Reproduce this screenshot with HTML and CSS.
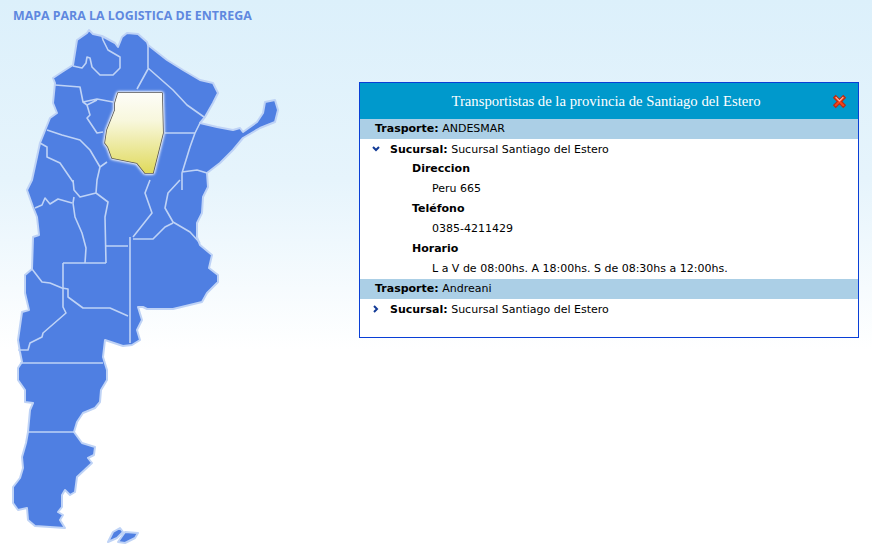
FILE: index.html
```html
<!DOCTYPE html>
<html lang="es">
<head>
  <meta charset="UTF-8" />
  <title>Mapa para la logistica de entrega</title>
  <link rel="stylesheet" href="styles.css">
</head>
<body>
  <div class="page">
    <div class="map-col">
      <h1 class="map-title">MAPA PARA LA LOGISTICA DE ENTREGA</h1>
      <svg class="map" viewBox="0 27 290 520" width="290" height="520">
        <defs>
          <linearGradient id="prov" x1="0" y1="0" x2="0" y2="1">
            <stop offset="0" stop-color="#fdfdf8"/>
            <stop offset="0.35" stop-color="#f8f7dc"/>
            <stop offset="1" stop-color="#e0da5c"/>
          </linearGradient>
        </defs>
        <!-- pais -->
        <path class="land" d="M73 65L77 40 87 33 89 30 93 34 102 36 115 43 118 47 122 37 127 33 138 34 147 42 148 45 167 60 183 70 200 80 213 83 218 93 213 103 205 117 200 123 217 127 233 130 240 128 243 132 257 122 263 113 265 102 275 100 278 110 275 122 260 128 243 138 233 150 220 163 207 173 208 187 203 197 202 213 197 223 197 237 200 245 212 255 209 268 218 275 218 282 207 293 202 302 173 309 147 309 143 307 138 307 142 320 137 330 140 340 132 345 123 346 105 340 103 357 107 370 107 380 101 390 100 402 95 408 83 413 77 422 74 432 82 443 95 447 94 455 88 458 92 463 77 477 75 492 70 495 65 490 62 495 62 507 58 512 63 515 60 520 65 528 35 526 28 520 27 508 18 510 13 503 13 487 20 478 23 468 22 457 26 443 28 432 30 410 33 403 25 402 25 390 18 380 18 368 22 362 20 352 18 340 22 312 29 310 25 293 25 275 32 269 33 237 39 235 37 217 33 207 27 190 32 180 40 143 50 118 57 113 53 103 55 83 53 78 62 72Z"/>
        <path class="land" d="M108 542L113 532 120 528 123 532 117 538ZM118 542L125 532 138 533 135 538 125 543Z"/>
        <!-- limites entre provincias -->
        <path class="lines" d="M73 66L82 68 86 63 87 57 90 58 92 67 100 75 113 75 120 68 120 57 108 50 103 40 102 36"/>
        <path class="lines" d="M148 45L148 68 173 90 187 105 204 117M148 69L137 89"/>
        <path class="lines" d="M55 85L80 87 83 102 97 99 113 102M87 105L90 115 87 118 97 133 103 132M83 102L87 105 97 100"/>
        <path class="lines" d="M47 130L62 135 80 140 90 150 100 167 107 162M100 167L97 180 96 193 108 202 105 217 106 263"/>
        <path class="lines" d="M165 133L195 133 200 123M195 133L190 147 182 173 182 190M182 172L197 170 207 173"/>
        <path class="lines" d="M180 180L168 193 165 208 173 222 190 232 200 243M173 223L165 227 153 239 133 239M150 180L145 193 152 213 133 237"/>
        <path class="lines" d="M130 237L130 343M105 246L128 246M63 263L106 263M63 263L63 307 66 313 43 333 42 337 30 343 28 350 18 350"/>
        <path class="lines" d="M73 180L74 190 80 197 96 193M74 197L73 203 75 217 82 233 86 248 85 263M35 208L42 205 45 198 50 204 58 199 72 203"/>
        <path class="lines" d="M32 269L42 282 50 283 62 288 68 289 68 297 83 308 110 308 128 316"/>
        <path class="lines" d="M40 143L47 147 47 157 60 163 73 182M20 363L103 363M28 432L74 432"/>
        <!-- Santiago del Estero -->
        <path class="selected" d="M118 93L162 93 163 133 153 173 145 173 137 163 112 158 108 147 105 143 107 130 115 110 115 103Z"/>
      </svg>
    </div>

    <div class="panel">
      <div class="panel-head">
        <span class="panel-title">Transportistas de la provincia de Santiago del Estero</span>
        <svg class="close" viewBox="0 0 14 14" width="15" height="15">
          <path d="M1.5 3.5L3.5 1.5 7 5 10.5 1.5 12.5 3.5 9 7 12.5 10.5 10.5 12.5 7 9 3.5 12.5 1.5 10.5 5 7Z" fill="#f4441a" stroke="#b92a12" stroke-width="1"/>
          <path d="M3.5 3L7 6.5 10.5 3" fill="none" stroke="#ffb59b" stroke-width="1"/>
        </svg>
      </div>

      <div class="carrier"><b>Trasporte:</b> ANDESMAR</div>
      <div class="branch">
        <svg class="arrow" viewBox="0 0 8 8" width="8" height="8"><path d="M1 2L4 5 7 2" fill="none" stroke="#123a96" stroke-width="2"/></svg>
        <span><b>Sucursal:</b> Sucursal Santiago del Estero</span>
      </div>
      <div class="label">Direccion</div>
      <div class="value">Peru 665</div>
      <div class="label">Teléfono</div>
      <div class="value">0385-4211429</div>
      <div class="label">Horario</div>
      <div class="value">L a V de 08:00hs. A 18:00hs. S de 08:30hs a 12:00hs.</div>

      <div class="carrier"><b>Trasporte:</b> Andreani</div>
      <div class="branch">
        <svg class="arrow" viewBox="0 0 8 8" width="8" height="8"><path d="M2 1L5 4 2 7" fill="none" stroke="#123a96" stroke-width="2"/></svg>
        <span><b>Sucursal:</b> Sucursal Santiago del Estero</span>
      </div>
    </div>
  </div>
</body>
</html>
```

FILE: styles.css
```css
* {
  box-sizing: border-box;
  margin: 0;
  padding: 0;
}

body {
  height: 547px;
  overflow: hidden;
  font-family: "DejaVu Sans", Verdana, sans-serif;
  font-size: 11px;
  color: #000;
  background: linear-gradient(#dcf0fb 0, #e6f4fc 180px, #ffffff 350px);
}

.page {
  display: flex;
}

.map-col {
  width: 359px;
  flex-shrink: 0;
}

.map-title {
  height: 27px;
  padding: 8px 0 0 13px;
  font-family: "Open Sans", sans-serif;
  font-size: 12.4px;
  line-height: 16px;
  font-weight: 700;
  color: #5f88df;
  white-space: nowrap;
}

.map {
  display: block;
}

.land {
  fill: #4f7fe2;
  stroke: #bfd3f6;
  stroke-width: 2;
  stroke-linejoin: round;
}

.lines {
  fill: none;
  stroke: #bfd3f6;
  stroke-width: 1.6;
  stroke-linejoin: round;
}

.selected {
  fill: url(#prov);
  stroke: #555;
  stroke-width: 1.6;
  stroke-linejoin: round;
  paint-order: stroke;
  filter: drop-shadow(0 0 1.5px #fff) drop-shadow(0 0 1px #fff);
}

.panel {
  width: 500px;
  height: 256px;
  margin-top: 82px;
  background: #fff;
  border: 1px solid #0a3fd6;
}

.panel-head {
  display: flex;
  align-items: center;
  height: 36px;
  padding: 0 11px 0 0;
  background: #0099cc;
  color: #fff;
}

.panel-title {
  flex: 1;
  padding-left: 20px;
  text-align: center;
  font-family: "Liberation Serif", "Times New Roman", serif;
  font-size: 14.7px;
}

.close {
  flex-shrink: 0;
}

.carrier {
  height: 20px;
  padding-left: 15px;
  line-height: 20px;
  background: #abcfe6;
}

.branch {
  display: flex;
  align-items: center;
  height: 20px;
  padding-left: 12px;
}

.arrow {
  margin-right: 10px;
  flex-shrink: 0;
}

.label {
  height: 20px;
  padding-left: 52px;
  line-height: 20px;
  font-weight: bold;
}

.value {
  height: 20px;
  padding-left: 72px;
  line-height: 20px;
}
```
